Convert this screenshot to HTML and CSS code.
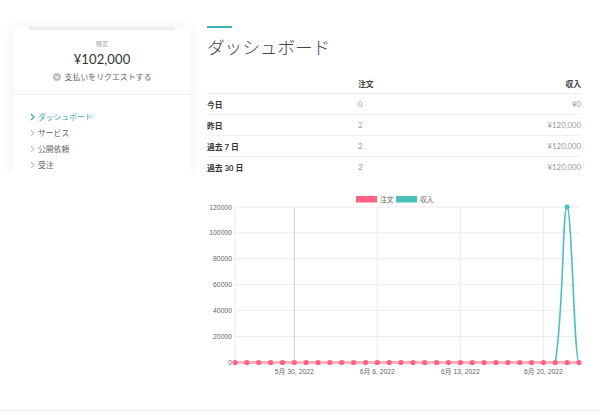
FILE: index.html
```html
<!DOCTYPE html>
<html lang="ja">
<head>
<meta charset="utf-8">
<title>ダッシュボード</title>
<link rel="stylesheet" href="styles.css">
</head>
<body>
<div class="layout">
  <aside class="card">
    <div class="strip"></div>
    <div class="balance">
      <div class="balance-label">残高</div>
      <div class="balance-amount">¥102,000</div>
      <div class="payout">
        <svg class="payout-icon" viewBox="0 0 10 10" width="8" height="8"><circle cx="5" cy="5" r="5" fill="#bcc3cc"/><path d="M3 4.3 L5 6.3 L7 4.3" fill="none" stroke="#fff" stroke-width="1.4"/></svg>
        <span>支払いをリクエストする</span>
      </div>
    </div>
    <ul class="menu">
      <li class="menu-item active"><svg class="chev" viewBox="0 0 5 8" width="5" height="8"><path d="M1 1 L4 4 L1 7" fill="none" stroke="currentColor" stroke-width="1.3"/></svg>ダッシュボード</li>
      <li class="menu-item"><svg class="chev" viewBox="0 0 5 8" width="5" height="8"><path d="M1 1 L4 4 L1 7" fill="none" stroke="currentColor" stroke-width="0.9"/></svg>サービス</li>
      <li class="menu-item"><svg class="chev" viewBox="0 0 5 8" width="5" height="8"><path d="M1 1 L4 4 L1 7" fill="none" stroke="currentColor" stroke-width="0.9"/></svg>公開依頼</li>
      <li class="menu-item"><svg class="chev" viewBox="0 0 5 8" width="5" height="8"><path d="M1 1 L4 4 L1 7" fill="none" stroke="currentColor" stroke-width="0.9"/></svg>受注</li>
    </ul>
  </aside>
  <main class="main">
    <div class="accent"></div>
    <h1 class="title">ダッシュボード</h1>
    <div class="stats">
      <div class="row head"><span></span><span>注文</span><span class="r">収入</span></div>
      <div class="row"><span class="lbl">今日</span><span class="val">0</span><span class="val r">¥0</span></div>
      <div class="row"><span class="lbl">昨日</span><span class="val">2</span><span class="val r">¥120,000</span></div>
      <div class="row"><span class="lbl">過去 7 日</span><span class="val">2</span><span class="val r">¥120,000</span></div>
      <div class="row last"><span class="lbl">過去 30 日</span><span class="val">2</span><span class="val r">¥120,000</span></div>
    </div>
    <svg class="chart" viewBox="0 0 380 190" width="380" height="190">
      <g class="legend">
        <rect x="149" y="6" width="21" height="6.5" fill="#ff6384"/>
        <text x="173" y="12">注文</text>
        <rect x="189" y="6" width="21" height="6.5" fill="#4bc0c0"/>
        <text x="213" y="12">収入</text>
      </g>
      <g stroke="#ececec" stroke-width="1">
        <line x1="28" y1="17" x2="372" y2="17"/>
        <line x1="28" y1="42.9" x2="372" y2="42.9"/>
        <line x1="28" y1="68.8" x2="372" y2="68.8"/>
        <line x1="28" y1="94.7" x2="372" y2="94.7"/>
        <line x1="28" y1="120.6" x2="372" y2="120.6"/>
        <line x1="28" y1="146.5" x2="372" y2="146.5"/>
        <line x1="28" y1="17" x2="28" y2="172.5"/>
        <line x1="170.3" y1="17" x2="170.3" y2="172.5"/>
        <line x1="253.4" y1="17" x2="253.4" y2="172.5"/>
        <line x1="336.4" y1="17" x2="336.4" y2="172.5"/>
      </g>
      <line x1="87.3" y1="17" x2="87.3" y2="172.5" stroke="#cfcfcf" stroke-width="1"/>
      <g class="ylab" text-anchor="end">
        <text x="25" y="19.5">120000</text>
        <text x="25" y="45.4">100000</text>
        <text x="25" y="71.3">80000</text>
        <text x="25" y="97.2">60000</text>
        <text x="25" y="123.1">40000</text>
        <text x="25" y="149">20000</text>
        <text x="25" y="175">0</text>
      </g>
      <g class="xlab" text-anchor="middle">
        <text x="87.3" y="184">5月 30, 2022</text>
        <text x="170.3" y="184">6月 6, 2022</text>
        <text x="253.4" y="184">6月 13, 2022</text>
        <text x="336.4" y="184">6月 20, 2022</text>
      </g>
      <path d="M348.3,172.5 C357.1,114.7 355.4,17 360.1,17 C364.8,17 367.2,172.5 372,172.5" fill="none" stroke="#4bc0c0" stroke-width="1.6"/>
      <line x1="28" y1="172.5" x2="372" y2="172.5" stroke="#ff6384" stroke-opacity="0.5" stroke-width="3"/>
      <g fill="#ff6384">
        <circle cx="28" cy="172.5" r="2.6"/><circle cx="39.86" cy="172.5" r="2.6"/><circle cx="51.72" cy="172.5" r="2.6"/><circle cx="63.59" cy="172.5" r="2.6"/><circle cx="75.45" cy="172.5" r="2.6"/>
        <circle cx="87.31" cy="172.5" r="2.6"/><circle cx="99.17" cy="172.5" r="2.6"/><circle cx="111.03" cy="172.5" r="2.6"/><circle cx="122.9" cy="172.5" r="2.6"/><circle cx="134.76" cy="172.5" r="2.6"/>
        <circle cx="146.62" cy="172.5" r="2.6"/><circle cx="158.48" cy="172.5" r="2.6"/><circle cx="170.34" cy="172.5" r="2.6"/><circle cx="182.21" cy="172.5" r="2.6"/><circle cx="194.07" cy="172.5" r="2.6"/>
        <circle cx="205.93" cy="172.5" r="2.6"/><circle cx="217.79" cy="172.5" r="2.6"/><circle cx="229.66" cy="172.5" r="2.6"/><circle cx="241.52" cy="172.5" r="2.6"/><circle cx="253.38" cy="172.5" r="2.6"/>
        <circle cx="265.24" cy="172.5" r="2.6"/><circle cx="277.1" cy="172.5" r="2.6"/><circle cx="288.97" cy="172.5" r="2.6"/><circle cx="300.83" cy="172.5" r="2.6"/><circle cx="312.69" cy="172.5" r="2.6"/>
        <circle cx="324.55" cy="172.5" r="2.6"/><circle cx="336.41" cy="172.5" r="2.6"/><circle cx="348.28" cy="172.5" r="2.6"/><circle cx="360.14" cy="172.5" r="2.6"/><circle cx="372" cy="172.5" r="2.6"/>
      </g>
      <circle cx="360.1" cy="17" r="2.6" fill="#4bc0c0"/>
    </svg>
  </main>
</div>
<footer class="footer"></footer>
</body>
</html>
```

FILE: styles.css
```css
html, body {
  margin: 0;
  padding: 0;
  background: #fff;
}
body {
  font-family: Lato, "Noto Sans CJK JP", sans-serif;
  color: #333;
}
.layout {
  display: flex;
  gap: 16px;
  height: 410px;
  padding-left: 13px;
  box-sizing: border-box;
  overflow: hidden;
}
.card {
  width: 178px;
  height: 148px;
  margin-top: 27px;
  flex: none;
  background: #fff;
  box-shadow: 0 0 12px rgba(0, 0, 0, 0.07);
  clip-path: inset(-20px -20px 0 -20px);
  overflow: hidden;
}
.strip {
  height: 3px;
  margin: 0 16px;
  background: #eceef2;
}
.balance {
  text-align: center;
  padding-top: 10px;
  padding-bottom: 11px;
  border-bottom: 1px solid #eeeeee;
}
.balance-label {
  font-size: 6px;
  line-height: 7px;
  color: #999;
}
.balance-amount {
  margin-top: 4px;
  font-size: 13px;
  line-height: 16px;
  color: #333;
  letter-spacing: 0.1px;
}
.payout {
  margin-top: 4px;
  display: flex;
  align-items: center;
  justify-content: center;
  gap: 4px;
  font-size: 7.9px;
  line-height: 12px;
  color: #666;
}
.payout-icon {
  display: block;
}
.menu {
  list-style: none;
  margin: 0;
  padding: 14px 0 0 17px;
}
.menu-item {
  display: flex;
  align-items: center;
  gap: 3px;
  font-size: 7.8px;
  line-height: 16px;
  color: #666;
}
.menu-item .chev {
  color: #aaa;
  display: block;
}
.menu-item.active {
  color: #3aa9aa;
}
.menu-item.active .chev {
  color: #3aa9aa;
}
.main {
  width: 374px;
  flex: none;
  padding-top: 26px;
}
.accent {
  width: 25px;
  height: 2px;
  background: #3fb1b3;
}
.title {
  margin: 7px 0 0;
  font-family: "Noto Sans CJK JP", sans-serif;
  font-weight: 300;
  font-size: 17.6px;
  line-height: 24px;
  color: #444;
}
.stats {
  margin-top: 14px;
  font-size: 7.8px;
}
.row {
  display: grid;
  grid-template-columns: 151px 1fr auto;
  height: 20px;
  align-items: center;
  border-bottom: 1px solid #f0f0f0;
}
.row.head {
  border-bottom: 1px solid #ebebeb;
  font-weight: 700;
  color: #444;
}
.row.last {
  border-bottom: none;
}
.r {
  text-align: right;
}
.lbl {
  font-weight: 700;
  color: #333;
}
.val {
  color: #999;
}
.chart {
  display: block;
  margin-top: 13px;
  overflow: visible;
}
.chart text {
  font-family: "Liberation Sans", "Noto Sans CJK JP", sans-serif;
  font-size: 6.8px;
  fill: #666;
}
.footer {
  border-top: 1px solid #f0f0f0;
  height: 6px;
}
```
